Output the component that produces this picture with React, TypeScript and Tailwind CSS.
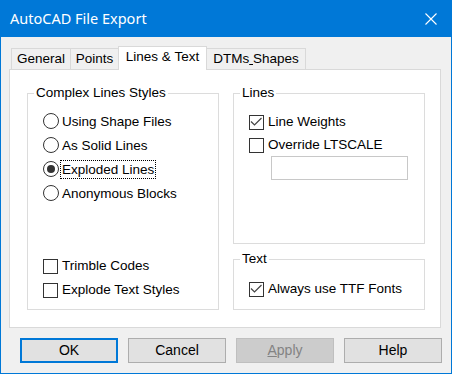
import React from "react";

const font = { fontFamily: '"Liberation Sans", Arial, sans-serif' };

function Radio({ checked, label, focus }: { checked?: boolean; label: string; focus?: boolean }) {
  return (
    <div className="flex h-[24px] items-center">
      <div className="flex h-[16px] w-[16px] items-center justify-center rounded-full border border-[#333333] bg-white">
        {checked && <div className="h-[8px] w-[8px] rounded-full bg-[#333333]" />}
      </div>
      <span
        className={
          "ml-[2px] px-[1px] leading-[17px] text-black " +
          (focus ? "outline outline-1 outline-dotted outline-black" : "")
        }
      >
        {label}
      </span>
    </div>
  );
}

function Check({ checked, label, h = "h-[24px]" }: { checked?: boolean; label: string; h?: string }) {
  return (
    <div className={"flex items-center " + h}>
      <div className="flex h-[15px] w-[15px] items-center justify-center border border-[#333333] bg-white">
        {checked && (
          <svg width="13" height="13" viewBox="0 0 13 13">
            <polyline points="1,5.5 4.5,9 11.5,2" fill="none" stroke="#444444" strokeWidth="1.2" />
          </svg>
        )}
      </div>
      <span className="ml-[4px] text-black">{label}</span>
    </div>
  );
}

function Group({ label, className, children }: { label: string; className: string; children: React.ReactNode }) {
  return (
    <div className={"relative border border-[#dcdcdc] " + className}>
      <span className="absolute left-[6px] top-[-10px] bg-white px-[2px] leading-[18px] text-black">{label}</span>
      {children}
    </div>
  );
}

function Button({ label, primary, disabled }: { label: React.ReactNode; primary?: boolean; disabled?: boolean }) {
  const cls = primary
    ? "border-2 border-[#0078d7] bg-[#e1e1e1] text-black"
    : disabled
    ? "border border-[#bfbfbf] bg-[#cccccc] text-[#838383]"
    : "border border-[#adadad] bg-[#e1e1e1] text-black";
  return (
    <div className={"flex h-[25px] w-[98px] items-center justify-center text-[14px] " + cls}>{label}</div>
  );
}

export default function App() {
  return (
    <div
      className="flex h-[374px] w-[452px] flex-col border border-[#0078d7] bg-[#f0f0f0] text-[13.5px]"
      style={font}
    >
      {/* Title bar */}
      <div className="flex h-[36px] shrink-0 items-center justify-between bg-[#0078d7] pl-[9px] pr-[14px]">
        <span className="text-[14.5px] text-white" style={{ fontFamily: '"Noto Sans", "Open Sans", sans-serif' }}>
          AutoCAD File Export
        </span>
        <svg width="12" height="12" viewBox="0 0 12 12">
          <path d="M0.5 0.5 L11.5 11.5 M11.5 0.5 L0.5 11.5" stroke="white" strokeWidth="1.1" />
        </svg>
      </div>

      {/* Tabs */}
      <div className="mt-[9px] flex h-[23px] items-end pl-[10px]">
        <div className="flex h-[21px] w-[59px] items-center justify-center border-l border-t border-[#d9d9d9] bg-[#f0f0f0]">
          General
        </div>
        <div className="flex h-[21px] w-[48px] items-center justify-center border-l border-t border-[#d9d9d9] bg-[#f0f0f0]">
          Points
        </div>
        <div className="relative z-10 mb-[-1px] flex h-[24px] w-[89px] items-center justify-center border-l border-r border-t border-[#d9d9d9] bg-white pb-[3px]">
          Lines &amp; Text
        </div>
        <div className="flex h-[21px] w-[99px] items-center justify-center border-r border-t border-[#d9d9d9] bg-[#f0f0f0]">
          DTMs<span className="underline">&nbsp;</span>Shapes
        </div>
      </div>

      {/* Panel */}
      <div className="ml-[8px] flex h-[259px] w-[432px] shrink-0 border border-[#d9d9d9] bg-white pl-[17px] pt-[23px]">
        <Group label="Complex Lines Styles" className="flex h-[217px] w-[192px] flex-col pb-[7px] pl-[15px] pt-[15px]">
          <Radio label="Using Shape Files" />
          <Radio label="As Solid Lines" />
          <Radio label="Exploded Lines" checked focus />
          <Radio label="Anonymous Blocks" />
          <div className="mt-auto">
            <Check label="Trimble Codes" />
            <Check label="Explode Text Styles" />
          </div>
        </Group>

        <div className="ml-[14px] flex flex-col gap-[15px]">
          <Group label="Lines" className="flex h-[151px] w-[192px] flex-col pl-[15px] pt-[17px]">
            <Check label="Line Weights" checked h="h-[22px]" />
            <Check label="Override LTSCALE" h="h-[22px] mt-[1px]" />
            <div className="ml-[22px] h-[24px] w-[137px] border border-[#c8c8c8] bg-white" />
          </Group>
          <Group label="Text" className="flex h-[51px] w-[192px] flex-col pl-[15px] pt-[18px]">
            <Check label="Always use TTF Fonts" checked h="h-[22px]" />
          </Group>
        </div>
      </div>

      {/* Buttons */}
      <div className="mt-[10px] flex gap-[10px] pl-[19px]">
        <Button label="OK" primary />
        <Button label="Cancel" />
        <Button
          label={
            <span>
              <span className="underline">A</span>pply
            </span>
          }
          disabled
        />
        <Button label="Help" />
      </div>
    </div>
  );
}
